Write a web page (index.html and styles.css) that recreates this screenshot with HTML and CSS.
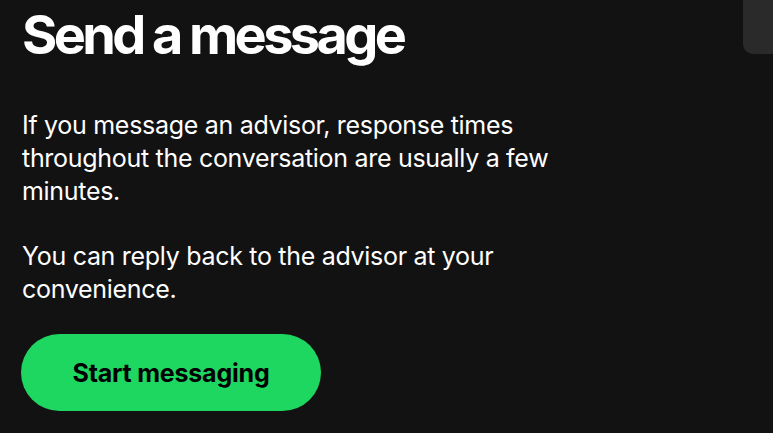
FILE: index.html
```html
<!DOCTYPE html>
<html lang="en">
<head>
<meta charset="utf-8">
<title>Send a message</title>
<link rel="stylesheet" href="styles.css">
</head>
<body>
<main class="panel">
  <h1 class="title">Send a message</h1>
  <p class="text">If you message an advisor, response times throughout the conversation are usually a few minutes.</p>
  <p class="text">You can reply back to the advisor at your convenience.</p>
  <button class="cta" type="button">Start messaging</button>
</main>
<div class="corner-tab"></div>
</body>
</html>
```
FILE: styles.css
```css
html, body {
  margin: 0;
  background: #121212;
  height: 100%;
  overflow: hidden;
}
body {
  font-family: Inter, "Noto Sans", "Liberation Sans", sans-serif;
  color: #ffffff;
  position: relative;
}
.panel {
  display: flex;
  flex-direction: column;
  align-items: flex-start;
  padding: 0 0 0 22px;
  width: 560px;
}
.title {
  margin: 3px 0 0 0;
  font-size: 54px;
  line-height: 64px;
  font-weight: 700;
  letter-spacing: -3.6px;
}
.text {
  margin: 42px 0 0 0;
  font-size: 25px;
  line-height: 33px;
  font-weight: 400;
  letter-spacing: -0.3px;
}
.text + .text {
  margin-top: 32px;
}
.cta {
  margin-top: 28px;
  width: 300px;
  height: 77px;
  border: none;
  border-radius: 999px;
  background: #1ed760;
  color: #000000;
  font-family: inherit;
  font-size: 25px;
  font-weight: 700;
  letter-spacing: -0.2px;
  margin-left: -1px;
}
.corner-tab {
  position: absolute;
  top: 0;
  right: 0;
  width: 30px;
  height: 54px;
  background: #2a2a2a;
  border-bottom-left-radius: 10px;
}
```
